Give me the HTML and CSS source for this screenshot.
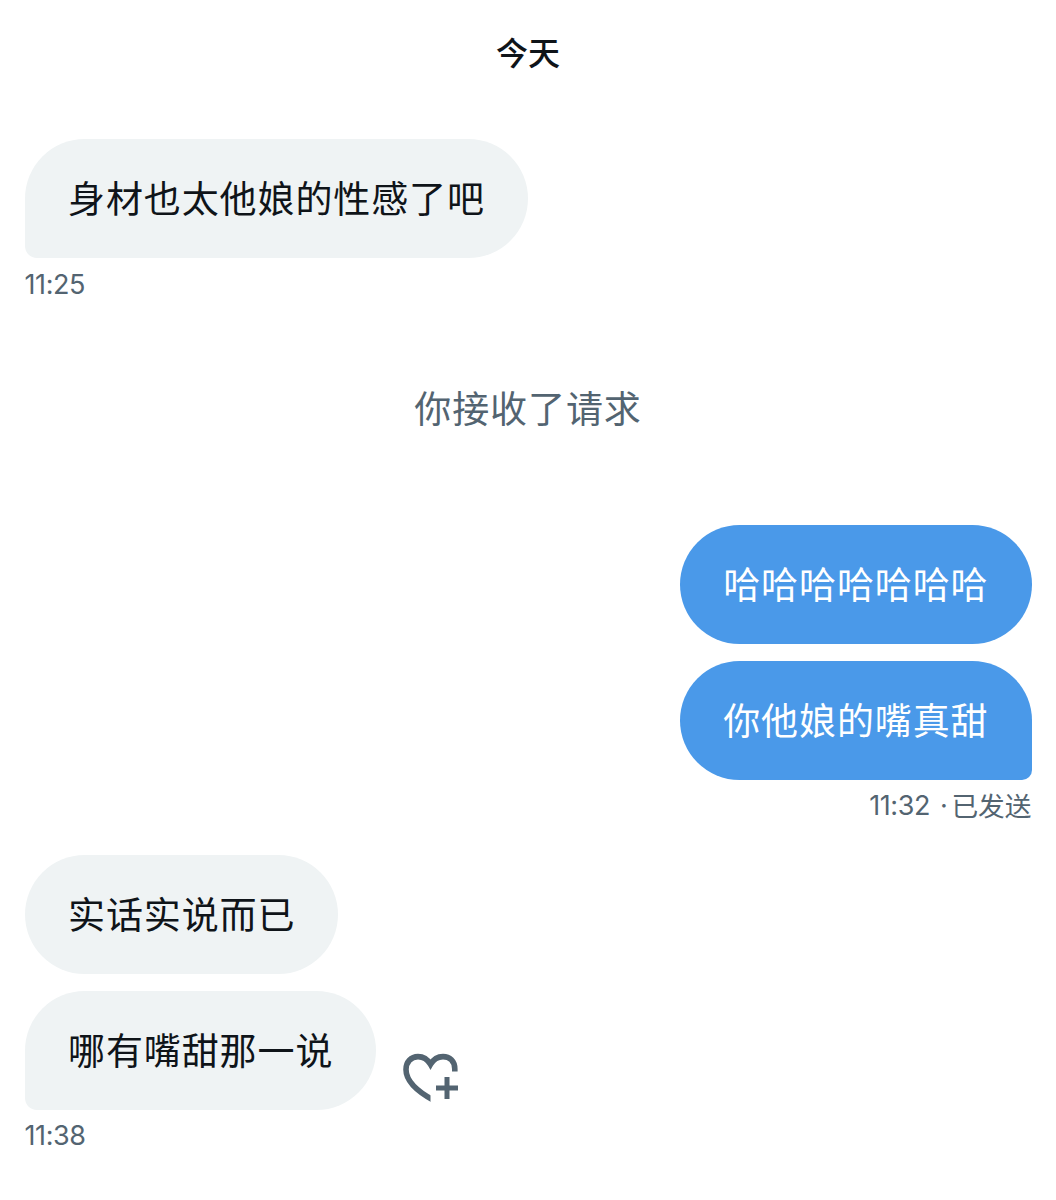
FILE: index.html
```
<!DOCTYPE html>
<html lang="zh-CN">
<head>
<meta charset="utf-8">
<title>私信</title>
<link rel="stylesheet" href="styles.css">
</head>
<body>
<main class="chat">
  <h1 class="day">今天</h1>
  <section class="group received first">
    <div class="bubble tail">身材也太他娘的性感了吧</div>
    <time class="meta">11:25</time>
  </section>
  <p class="notice">你接收了请求</p>
  <section class="group sent">
    <div class="bubble">哈哈哈哈哈哈哈</div>
    <div class="bubble tail">你他娘的嘴真甜</div>
    <div class="meta"><time>11:32</time><span class="dot">·</span><span class="status">已发送</span></div>
  </section>
  <section class="group received last">
    <div class="bubble">实话实说而已</div>
    <div class="row">
      <div class="bubble tail">哪有嘴甜那一说</div>
      <button class="react" aria-label="添加回应">
        <svg width="62" height="54" viewBox="0 0 62 54" fill="none" stroke="currentColor">
          <clipPath id="cut"><path d="M0 0H62V21.5H30.5V54H0Z"/></clipPath>
          <path clip-path="url(#cut)" stroke-width="5.6" d="M54.8 24V19C54.8 10.8 49.6 6.6 43 6.6C37.4 6.6 33.3 9.6 30.5 14.4C27.7 9.6 23.5 6.6 18 6.6C11 6.6 6 12 6 19.5C6 30 14.5 40 34 50.5"/>
          <path stroke-width="5" d="M47 27V49M36 38H58"/>
        </svg>
      </button>
    </div>
    <time class="meta">11:38</time>
  </section>
</main>
</body>
</html>
```
FILE: styles.css
```
* { box-sizing: border-box; }
body {
  margin: 0;
  background: #fff;
  color: #0f1419;
  font-family: Inter, "Noto Sans CJK SC", sans-serif;
}
.chat {
  display: flex;
  flex-direction: column;
  height: 1200px;
  padding: 31px 24.5px 0;
}
.day {
  margin: 0;
  font-size: 32px;
  line-height: 46px;
  font-weight: 500;
  text-align: center;
}
.group {
  display: flex;
  flex-direction: column;
  align-items: flex-start;
}
.first { margin-top: 62px; }
.bubble {
  height: 119px;
  padding: 0 43px 0 43.5px;
  border-radius: 60px;
  background: #eff3f4;
  font-size: 37px;
  letter-spacing: 0.9px;
  line-height: 121px;
  white-space: nowrap;
}
.received .tail { border-bottom-left-radius: 12px; }
.sent { align-items: flex-end; margin-top: 87px; }
.sent .bubble { background: #4a99e9; color: #fff; }
.sent .tail { border-bottom-right-radius: 10px; }
.sent .tail, .row { margin-top: 17px; }
.meta {
  display: flex;
  height: 36px;
  margin-top: 9px;
  color: #536471;
  font-size: 27px;
  letter-spacing: -0.4px;
  line-height: 36px;
}
.sent .meta { margin-top: 8px; margin-bottom: 1px; }
.dot { margin: 0 4px 0 10px; }
.status { font-size: 26.7px; letter-spacing: 0; }
.notice {
  margin: 79px 0 0;
  color: #536471;
  font-size: 37px;
  letter-spacing: 0.9px;
  line-height: 56px;
  text-align: center;
}
.last { margin-top: 30px; }
.last > .meta { margin-top: 8px; }
.row { display: flex; align-items: flex-end; gap: 23.5px; }
.react {
  display: flex;
  margin: 0 0 6px;
  padding: 0;
  border: 0;
  background: none;
  color: #536471;
}
```
